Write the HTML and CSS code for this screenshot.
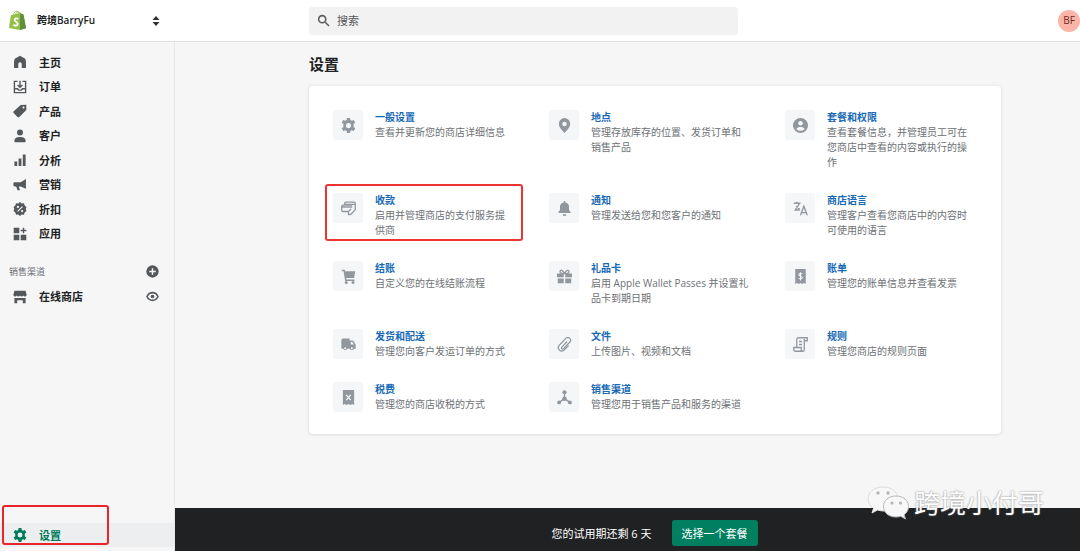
FILE: index.html
```html
<!DOCTYPE html>
<html lang="zh-CN">
<head>
<meta charset="utf-8">
<title>设置</title>
<link rel="stylesheet" href="styles.css">
</head>
<body>
<header class="topbar">
  <button class="store" type="button">
    <svg class="store-logo" viewBox="0 0 20 22"><path d="M3 5.500 12.800 3l1.600 1 1.900.6L19 19.200 12.600 21 1 18.800z" fill="#95bf47"/><path d="M12.800 3l1.600 1 1.900.6L19 19.200 12.600 21z" fill="#5e8e3e"/><path d="M5.200 5.600C6 2.800 7.600 1 9.200 1.200c1.400.2 2 1.600 2 3.600M7.800 5C8.200 3 9.500 1.700 11 1.700c1 .2 1.600 1.300 1.700 2.300" fill="none" stroke="#95bf47" stroke-width="1"/><path d="M11 9.300C9 8.300 6.900 8.800 7 10.500c.1 1.800 3.300 1.800 3.200 4.100-.1 2.100-2.500 2.300-4.500 1" fill="none" stroke="#fff" stroke-width="1.900"/></svg>
    <span class="store-name">跨境BarryFu</span>
    <svg class="store-arrows" viewBox="0 0 8 10"><path d="M4 0 7.500 4h-7zM4 10 .5 6h7z" fill="#303030"/></svg>
  </button>
  <label class="search">
    <svg class="icon-search" viewBox="0 0 20 20"><path d="M8 2.500a5.500 5.500 0 1 0 0 11 5.500 5.500 0 0 0 0-11zM12.200 12.200 18.500 18.500" fill="none" stroke="#5c5f62" stroke-width="2.400"/></svg>
    <input class="search-input" type="text" placeholder="搜索" aria-label="搜索">
  </label>
  <button class="avatar" type="button">BF</button>
</header>
<div class="frame">
  <nav class="sidebar">
    <ul class="nav-list">
      <li><a class="nav-link" href="#"><svg viewBox="0 0 20 20"><path d="M10 1 2.500 5.500 1.500 9v9.500h6V13a2.500 2.500 0 0 1 5 0v5.500h6V9l-1-3.500z"/></svg>主页</a></li>
      <li><a class="nav-link" href="#"><svg viewBox="0 0 20 20"><path d="M6.500 2H2v16h16V2h-4.500M2 12.500h4.500l1.500 2h4l1.500-2H18M10 1v9M6.500 7l3.500 3.500L13.500 7" fill="none" stroke="currentColor" stroke-width="2"/></svg>订单</a></li>
      <li><a class="nav-link" href="#"><svg viewBox="0 0 20 20"><path fill-rule="evenodd" d="M11 1.500 19 1v7.500L9 18.500a1.800 1.800 0 0 1-2.500 0L1 13a1.800 1.800 0 0 1 0-2.500zM15 3.500a1.500 1.500 0 1 0 0 3 1.500 1.500 0 0 0 0-3z"/></svg>产品</a></li>
      <li><a class="nav-link" href="#"><svg viewBox="0 0 20 20"><circle cx="10" cy="5" r="4.300"/><path d="M2 17.500C2 13 5 11.500 10 11.500s8 1.500 8 6c0 .8-.5 1.500-1.500 1.500h-13c-1 0-1.500-.7-1.500-1.500z"/></svg>客户</a></li>
      <li><a class="nav-link" href="#"><svg viewBox="0 0 20 20"><path d="M2 12h4v6.500H2zM8 8h4v10.500H8zM14 2h4v16.500h-4z"/></svg>分析</a></li>
      <li><a class="nav-link" href="#"><svg viewBox="0 0 20 20"><path d="M18.500 1.500v14L11 12H8.500v1l1.500 4.500H6.500L4.500 12H2.500A2 2 0 0 1 .5 10V8a2 2 0 0 1 2-2H11z"/></svg>营销</a></li>
      <li><a class="nav-link" href="#"><svg viewBox="0 0 20 20"><path d="m10 0 2.500 2 3.200-.2.900 3.100L19.300 7l-1.200 3 1.200 3-2.700 2.100-.9 3.100-3.200-.2L10 20l-2.500-2-3.200.2-.9-3.100L.7 13l1.200-3L.7 7l2.700-2.100.9-3.100 3.200.2z"/><path d="m6.500 13.500 7-7" stroke="#f6f6f7" stroke-width="1.600"/><circle cx="7" cy="7" r="1.600" fill="#f6f6f7"/><circle cx="13" cy="13" r="1.600" fill="#f6f6f7"/></svg>折扣</a></li>
      <li><a class="nav-link" href="#"><svg viewBox="0 0 20 20"><path d="M1 1h8v8H1zM1 11h8v8H1zM11 11h8v8h-8zM14 1h2v3h3v2h-3v3h-2V6h-3V4h3z"/></svg>应用</a></li>
    </ul>
    <div class="channels">
      <h2 class="channels-title">销售渠道</h2>
      <button class="icon-button" type="button" aria-label="添加"><svg viewBox="0 0 20 20"><circle cx="10" cy="10" r="9.500"/><path d="M10 5v10M5 10h10" stroke="#f6f6f7" stroke-width="2.200"/></svg></button>
    </div>
    <div class="channels">
      <a class="nav-link" href="#"><svg viewBox="0 0 20 20"><path d="M2 1h16l1.500 6a2.500 2.500 0 0 1-4.800.8 2.500 2.500 0 0 1-4.700 0 2.500 2.500 0 0 1-4.700 0A2.500 2.500 0 0 1 .5 7zM2 11.500h16V19h-4v-4.500H6V19H2z"/></svg>在线商店</a>
      <button class="icon-button" type="button" aria-label="查看"><svg viewBox="0 0 20 20"><path d="M1.500 10C3.500 6 6.500 4 10 4s6.500 2 8.500 6c-2 4-5 6-8.500 6s-6.500-2-8.500-6z" fill="none" stroke="currentColor" stroke-width="2.400"/><circle cx="10" cy="10" r="2.800"/></svg></button>
    </div>
    <div class="sidebar-foot">
      <a class="nav-link nav-link-active" href="#"><svg viewBox="0 0 20 20"><use href="#gear"/></svg>设置</a>
    </div>
  </nav>
  <div class="page">
    <main class="content">
      <h1 class="title">设置</h1>
      <ul class="card">
        <li class="item"><span class="tile"><svg viewBox="0 0 20 20"><path id="gear" fill-rule="evenodd" d="M8 0h4l.5 2.800 1.800 1 2.700-1 2 3.500-2.200 1.800v3.800L19 13.700l-2 3.500-2.700-1-1.800 1L12 20H8l-.5-2.800-1.800-1-2.700 1-2-3.500 2.200-1.800V8.100L1 6.300l2-3.500 2.700 1 1.800-1zM10 6.500a3.500 3.500 0 1 0 0 7 3.500 3.500 0 0 0 0-7z"/></svg></span><div class="item-text"><a class="item-link" href="#">一般设置</a><p>查看并更新您的商店详细信息</p></div></li>
        <li class="item"><span class="tile"><svg viewBox="0 0 20 20"><path fill-rule="evenodd" d="M10 0a7.500 7.500 0 0 0-7.500 7.500C2.500 13 8 17 10 20c2-3 7.500-7 7.500-12.500A7.500 7.500 0 0 0 10 0zm0 5a3 3 0 1 0 0 6 3 3 0 0 0 0-6z"/></svg></span><div class="item-text"><a class="item-link" href="#">地点</a><p>管理存放库存的位置、发货订单和销售产品</p></div></li>
        <li class="item"><span class="tile"><svg viewBox="0 0 20 20"><circle cx="10" cy="10" r="10"/><circle cx="10" cy="7" r="3" fill="#f6f6f7"/><path d="M4.500 14.500C5.500 12.500 7.500 12 10 12s4.500.5 5.500 2.500A7 7 0 0 1 10 17a7 7 0 0 1-5.500-2.500z" fill="#f6f6f7"/></svg></span><div class="item-text"><a class="item-link" href="#">套餐和权限</a><p>查看套餐信息，并管理员工可在您商店中查看的内容或执行的操作</p></div></li>
        <li class="item item-marked"><span class="tile"><svg viewBox="0 0 20 20"><path d="M5 5V3a1.500 1.500 0 0 1 1.500-1.500h11A1.500 1.500 0 0 1 19 3v8.500L14 17a3 3 0 0 1-2.200 1H10v-4M10 14H2.500A1.500 1.500 0 0 1 1 12.500V7a1.500 1.500 0 0 1 1.500-1.500H15M13.500 10.500 10 14" fill="none" stroke="currentColor" stroke-width="1.700"/><path d="M1 7h14v2H1zM5 3.500h14v1.800H5z"/></svg></span><div class="item-text"><a class="item-link" href="#">收款</a><p>启用并管理商店的支付服务提供商</p></div></li>
        <li class="item"><span class="tile"><svg viewBox="0 0 20 20"><path d="M9 0h2v2a6 6 0 0 1 5 6v4l2 2.500V16H2v-1.500L4 12V8a6 6 0 0 1 5-6zM7.500 17.500h5a2.500 2.500 0 0 1-5 0z"/></svg></span><div class="item-text"><a class="item-link" href="#">通知</a><p>管理发送给您和您客户的通知</p></div></li>
        <li class="item"><span class="tile"><svg viewBox="0 0 20 20"><path d="M1 3h8L3 12h6M5 1v2M4 7l5 4M10 19l4.500-12L19 19M11.500 15.500h6" fill="none" stroke="currentColor" stroke-width="1.800"/></svg></span><div class="item-text"><a class="item-link" href="#">商店语言</a><p>管理客户查看您商店中的内容时可使用的语言</p></div></li>
        <li class="item"><span class="tile"><svg viewBox="0 0 20 20"><path d="M1 1h4l.5 2H19l-1.500 9H7l.3 2H18v2H5.500L3.500 3H1z"/><circle cx="7" cy="18" r="2"/><circle cx="16" cy="18" r="2"/></svg></span><div class="item-text"><a class="item-link" href="#">结账</a><p>自定义您的在线结账流程</p></div></li>
        <li class="item"><span class="tile"><svg viewBox="0 0 20 20"><path d="M0 6h9v5H0zM11 6h9v5h-9zM1 12.500h8V19H1zM11 12.500h8V19h-8z"/><path d="M10 6C8 1 4 .5 4 3.500 4 6 7 6 10 6zm0 0c2-5 6-5.500 6-2.500C16 6 13 6 10 6z" fill="none" stroke="currentColor" stroke-width="1.700"/></svg></span><div class="item-text"><a class="item-link" href="#">礼品卡</a><p>启用 Apple Wallet Passes 并设置礼品卡到期日期</p></div></li>
        <li class="item"><span class="tile"><svg viewBox="0 0 20 20"><path d="M3 0h14v20l-2.500-1.500L12.300 20 10 18.500 7.700 20l-2.200-1.500L3 20z"/><path d="M12.500 6.500C10 5.300 7.800 6 7.800 7.500c0 2.500 4.600 1.500 4.600 4 0 1.700-2.500 2.200-5 1M10 4.200v11" fill="none" stroke="#f6f6f7" stroke-width="1.400"/></svg></span><div class="item-text"><a class="item-link" href="#">账单</a><p>管理您的账单信息并查看发票</p></div></li>
        <li class="item"><span class="tile"><svg viewBox="0 0 20 20"><path d="M2 2h9.500v2.500H16l3.500 5.500v5.500H17a2.700 2.700 0 0 1-5.200 0H8.200a2.700 2.700 0 0 1-5.200 0H.5v-12z"/><path d="M13 6.500h2.200l2 3.500H13z" fill="#f6f6f7"/><circle cx="5.600" cy="15" r="1.300" fill="#f6f6f7"/><circle cx="14.400" cy="15" r="1.300" fill="#f6f6f7"/></svg></span><div class="item-text"><a class="item-link" href="#">发货和配送</a><p>管理您向客户发运订单的方式</p></div></li>
        <li class="item"><span class="tile"><svg viewBox="0 0 20 20"><path d="m13.500 6-7 7.500a1.500 1.500 0 0 0 2.200 2.200l8.300-8.700a3.600 3.600 0 0 0-5.200-5.200L3 11a4.600 4.600 0 0 0 6.500 6.500l6-6" fill="none" stroke="currentColor" stroke-width="1.600"/></svg></span><div class="item-text"><a class="item-link" href="#">文件</a><p>上传图片、视频和文档</p></div></li>
        <li class="item"><span class="tile"><svg viewBox="0 0 20 20"><path d="M5 14V3.500A2.500 2.500 0 0 1 7.500 1H19v4h-4M15 5V2.500M15 5v11.500A2.500 2.500 0 0 1 12.500 19H3.500A2.500 2.500 0 0 1 1 16.500V14h10v2.500a2 2 0 0 0 2 2.500M8 6h4M8 10h4" fill="none" stroke="currentColor" stroke-width="1.700"/></svg></span><div class="item-text"><a class="item-link" href="#">规则</a><p>管理您商店的规则页面</p></div></li>
        <li class="item"><span class="tile"><svg viewBox="0 0 20 20"><path d="M2.500 0h15v20l-2.500-1.500L12.500 20 10 18.500 7.500 20 5 18.500 2.500 20z"/><path d="m7 6.500 6 7M13 6.500l-6 7" stroke="#f6f6f7" stroke-width="1.800"/></svg></span><div class="item-text"><a class="item-link" href="#">税费</a><p>管理您的商店收税的方式</p></div></li>
        <li class="item"><span class="tile"><svg viewBox="0 0 20 20"><circle cx="10" cy="3" r="2.800"/><circle cx="10" cy="11.500" r="3"/><circle cx="2.800" cy="16.500" r="2.600"/><circle cx="17.200" cy="16.500" r="2.600"/><path d="M10 3v8.500L2.800 16.500M10 11.500l7.200 5" fill="none" stroke="currentColor" stroke-width="1.700"/></svg></span><div class="item-text"><a class="item-link" href="#">销售渠道</a><p>管理您用于销售产品和服务的渠道</p></div></li>
      </ul>
    </main>
    <footer class="trial">
      <span>您的试用期还剩 6 天</span>
      <button class="plan-button" type="button">选择一个套餐</button>
      <div class="watermark">
        <svg class="wechat" viewBox="0 0 42 34"><g fill="#f7f7f7" stroke="#dcdcdc"><path d="M16 1C7 1 1 6.500 1 13c0 4 2 7 5.500 9.300L5 27l5.500-3c2 .6 4 1 6.500 1 8 0 14-5.500 14-12S25 1 16 1z"/><path d="M29 10c-7.500 0-12.500 4.700-12.500 10.500S21.500 31 29 31c1.700 0 3.300-.2 4.700-.7l4.800 2.700-1.400-4.300c2.800-2 4.400-4.900 4.400-8.200C41.500 14.700 36.500 10 29 10z" stroke="#b8b8b8"/></g><g fill="#b5b5b5"><circle cx="11" cy="7" r="1.700"/><circle cx="21" cy="7" r="1.700"/><circle cx="25" cy="17" r="1.600"/><circle cx="33.500" cy="17" r="1.600"/></g></svg>
        <span>跨境小付哥</span>
      </div>
    </footer>
  </div>
</div>
</body>
</html>
```
FILE: styles.css
```css
* { box-sizing: border-box; }
body {
  margin: 0;
  min-height: 100vh;
  display: flex;
  flex-direction: column;
  background: #f6f6f7;
  color: #202223;
  font: 11px/15px "Open Sans", "Noto Sans CJK SC", sans-serif;
}
ul, p, h1, h2 { margin: 0; padding: 0; }
ul { list-style: none; }
a { color: inherit; text-decoration: none; }
button { border: 0; padding: 0; background: none; color: inherit; font: inherit; }
svg { display: block; fill: currentColor; flex: none; }

.topbar {
  height: 42px;
  display: flex;
  align-items: center;
  background: #fff;
  border-bottom: 1px solid #dfe1e2;
}
.store {
  width: 175px;
  padding: 0 15px 0 8px;
  display: flex;
  align-items: center;
}
.store-logo { width: 19px; height: 21px; }
.store-name { flex: 1; padding-left: 10px; text-align: left; font-size: 10px; font-weight: 600; }
.store-arrows { width: 8px; height: 10px; }
.search {
  width: 429px;
  height: 28px;
  margin-left: 134px;
  padding: 0 8px;
  display: flex;
  align-items: center;
  gap: 7px;
  border-radius: 3px;
  background: #f2f2f3;
}
.icon-search { width: 13px; height: 13px; }
.search-input { flex: 1; padding: 0; border: 0; outline: 0; background: none; font: inherit; }
.search-input::placeholder { color: #55585b; opacity: 1; }
.avatar {
  width: 22px;
  height: 22px;
  margin-left: auto;
  border-radius: 50%;
  background: #fbb5a8;
  color: #6b2a20;
  font-size: 10px;
}

.frame { flex: 1; display: flex; }
.sidebar {
  width: 175px;
  padding-top: 8px;
  display: flex;
  flex-direction: column;
  border-right: 1px solid #e6e7e8;
}
.nav-list { height: 196px; display: grid; grid-auto-rows: 1fr; margin-bottom: 13px; }
.nav-link {
  height: 24px;
  padding-left: 13px;
  display: flex;
  align-items: center;
  gap: 12px;
  font-weight: 600;
}
.nav-link svg { width: 14px; height: 14px; color: #55585b; }
.nav-link-active, .nav-link-active svg { color: #007a5c; }
.channels {
  height: 25px;
  padding-right: 15px;
  display: flex;
  align-items: center;
  justify-content: space-between;
}
.channels-title { padding-left: 9px; font-size: 9px; font-weight: 400; color: #6d7175; }
.icon-button { color: #55585b; }
.icon-button svg { width: 13px; height: 13px; }
.sidebar-foot { position: relative; margin: auto 0 4px; background: #edeeef; }
.sidebar-foot::after {
  content: "";
  position: absolute;
  inset: -18px 65px 2px 2px;
  border: 2px solid #e8252b;
  border-radius: 3px;
}

.page { flex: 1; display: flex; flex-direction: column; }
.content { flex: 1; padding: 12px 79px 24px 134px; }
.title { font-size: 15px; line-height: 20px; font-weight: 700; }
.card {
  margin-top: 12px;
  padding: 24px 28px 22px 24px;
  display: grid;
  grid-template-columns: 180fr 200fr 188fr;
  gap: 23px 36px;
  border-radius: 4px;
  background: #fff;
  box-shadow: 0 0 4px #dfe1e3, 0 1px 2px #e2e4e6;
}
.item { position: relative; display: flex; align-items: flex-start; gap: 12px; font-size: 10px; }
.item-marked::after {
  content: "";
  position: absolute;
  inset: -9px -10px -3px -8px;
  border: 2px solid #ee3430;
  border-radius: 3px;
}
.tile {
  width: 30px;
  height: 30px;
  flex: none;
  display: grid;
  place-items: center;
  border-radius: 3px;
  background: #f4f6f8;
  color: #92979d;
}
.tile svg { width: 15px; height: 15px; }
.item-text { flex: 1; color: #6d7175; }
.item-link { display: block; color: #1769b5; font-weight: 700; }

.trial {
  position: relative;
  height: 43px;
  padding: 7px 0 0 54px;
  display: flex;
  align-items: center;
  justify-content: center;
  gap: 20px;
  background: #202123;
  color: #fff;
}
.plan-button { height: 26px; padding: 0 10px; border-radius: 3px; background: #008060; }
.watermark {
  position: absolute;
  right: 36px;
  bottom: 30px;
  display: flex;
  align-items: center;
  gap: 5px;
  font-size: 26px;
  line-height: 36px;
  text-shadow: 0 0 2px #777;
}
.wechat { width: 42px; height: 34px; }
```
